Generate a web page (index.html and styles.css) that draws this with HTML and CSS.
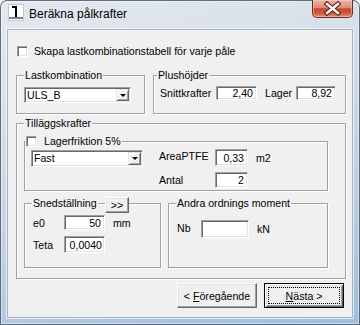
FILE: index.html
```html
<!DOCTYPE html>
<html>
<head>
<meta charset="utf-8">
<link rel="stylesheet" href="styles.css">
</head>
<body>
<div class="window">
  <div class="titlebar">
    <svg class="appicon" width="16" height="17" viewBox="0 0 16 17">
      <rect x="0.5" y="0.5" width="15" height="16" fill="#fff" stroke="#c4c9cf"/>
      <path d="M7 2h2v11H7z M4 2h3v2H4z" fill="#000"/>
      <rect x="1" y="13" width="14" height="2" fill="#7d8289"/>
    </svg>
    <div class="title">Beräkna pålkrafter</div>
    <div class="close">
      <svg width="39" height="17" viewBox="0 0 39 17">
        <path d="M14 4 L25 13 M25 4 L14 13" stroke="#5e1c12" stroke-width="4.6" stroke-linecap="square"/>
        <path d="M14 4 L25 13 M25 4 L14 13" stroke="#fff" stroke-width="2.4" stroke-linecap="square"/>
      </svg>
    </div>
  </div>
  <div class="client">
    <div class="check-row"><span class="checkbox"></span><span>Skapa lastkombinationstabell för varje påle</span></div>

    <div class="row2">
      <fieldset class="group g-last">
        <legend>Lastkombination</legend>
        <div class="last-body">
          <div class="combo w-uls"><span class="combo-text">ULS_B</span><span class="combo-btn"><i class="arrow"></i></span></div>
        </div>
      </fieldset>
      <fieldset class="group g-plus">
        <legend>Plushöjder</legend>
        <div class="plus-body">
          <span class="lbl-snitt">Snittkrafter</span>
          <span class="field f-240">2,40</span>
          <span class="lbl-lager">Lager</span>
          <span class="field f-892">8,92</span>
        </div>
      </fieldset>
    </div>

    <fieldset class="group g-till">
      <legend>Tilläggskrafter</legend>
      <div class="till-body">
        <fieldset class="group g-fri">
          <legend class="chk-legend"><span class="leg-flex"><span class="checkbox"></span><span>Lagerfriktion 5%</span></span></legend>
          <div class="fri-body">
            <div class="combo w-fast"><span class="combo-text">Fast</span><span class="combo-btn"><i class="arrow"></i></span></div>
            <div class="ptfe-grid">
              <span class="lbl-ptfe">AreaPTFE</span><span class="field f-033">0,33</span><span class="unit">m2</span>
              <span>Antal</span><span class="field f-2">2</span><span></span>
            </div>
          </div>
        </fieldset>
        <div class="row-sub">
          <fieldset class="group g-sned">
            <legend>Snedställning</legend>
            <div class="sned-grid">
              <span>e0</span><span class="field f-50">50</span><span class="unit">mm</span>
              <span>Teta</span><span class="field f-teta">0,0040</span><span></span>
            </div>
          </fieldset>
          <fieldset class="group g-andra">
            <legend>Andra ordnings moment</legend>
            <div class="andra-body">
              <span class="lbl-nb">Nb</span><span class="field f-nb"></span><span class="unit">kN</span>
            </div>
          </fieldset>
          <button class="btn-more">&gt;&gt;</button>
        </div>
      </div>
    </fieldset>

    <div class="buttons">
      <button class="btn"><span>&lt; <u>F</u>öregående</span></button>
      <button class="btn default"><span class="focus"><span><u>N</u>ästa &gt;</span></span></button>
    </div>
  </div>
</div>
</body>
</html>
```

FILE: styles.css
```css
* { box-sizing: border-box; }
html, body { margin: 0; padding: 0; }
body {
  width: 360px; height: 325px; overflow: hidden; background: #fff;
  font-family: "Liberation Sans", Arial, sans-serif; font-size: 10.6px; color: #000;
}
.window {
  width: 360px; height: 325px; display: flex; flex-direction: column;
  border-radius: 7px 7px 0 0;
  background: linear-gradient(165deg, #e4e9ef 0%, #d6dfe8 30%, #bfd0e2 62%, #9dbde0 100%);
  box-shadow: inset 0 0 0 1px rgba(50,65,85,.75), inset 0 0 0 2px rgba(255,255,255,.45);
}
.titlebar { height: 30px; flex: none; display: flex; align-items: flex-start; }
.appicon { margin: 4px 0 0 8px; flex: none; }
.title { margin: 6px 0 0 5px; font-size: 12px; line-height: 16px; color: #000; }
.close {
  margin-left: auto; margin-right: 7px; width: 41px; height: 18px; flex: none;
  border: 1px solid #6b2b1f; border-top: none; border-radius: 0 0 5px 5px;
  background: linear-gradient(#eab3a5 0%, #dc8c78 45%, #c6472d 52%, #cd5a3c 78%, #e4957a 100%);
  box-shadow: inset 0 0 0 1px rgba(255,220,210,.45);
}
.close svg { display: block; }
.client {
  margin: 0 8px; width: 344px; height: 287px; flex: none; background: #f0f0f0;
  box-shadow: 0 0 0 1px #a7b1bc, 0 0 0 2px rgba(255,255,255,.7);
  display: flex; flex-direction: column; align-items: flex-start;
}
.check-row {
  display: flex; align-items: center; height: 13px; line-height: 13px;
  margin: 15px 0 0 9px; white-space: nowrap;
}
.checkbox {
  width: 11px; height: 11px; flex: none; background: #fff;
  border: 1px solid; border-color: #a0a0a0 #fff #fff #a0a0a0;
  box-shadow: inset 1px 1px #696969, inset -1px -1px #e3e3e3;
}
.check-row .checkbox { margin-right: 6px; }

.group {
  margin: 0; padding: 0; min-width: 0; border: 1px solid #a0a0a0;
  box-shadow: inset 1px 1px #fff, 1px 1px #fff;
}
.group > legend {
  padding: 0 1px; margin-left: 7px; line-height: 14px; height: 14px;
  background: #f0f0f0; white-space: nowrap;
}
.row2 { display: flex; gap: 8px; margin: 10px 0 0 8px; }
.g-last { width: 129px; height: 46px; }
.g-plus { width: 193px; height: 46px; }
.g-plus > legend { margin-left: 3px; }
.last-body { padding: 5px 0 0 7px; }
.plus-body { display: flex; align-items: center; padding: 4px 0 0 6px; white-space: nowrap; }
.lbl-snitt { width: 56px; }
.lbl-lager { width: 31px; margin-left: 8px; }

.field {
  height: 15px; background: #fff; display: flex; align-items: center; justify-content: flex-end;
  padding: 0 3px; border: 1px solid; border-color: #a0a0a0 #fff #fff #a0a0a0;
  box-shadow: inset 1px 1px #696969, inset -1px -1px #e3e3e3; line-height: 12px;
}
.f-240 { width: 41px; height: 14px; }
.f-892 { width: 40px; height: 14px; }

.combo {
  display: flex; height: 16px; background: #fff; padding: 1px;
  border: 1px solid; border-color: #a0a0a0 #fff #fff #a0a0a0;
  box-shadow: inset 1px 1px #696969, inset -1px -1px #e3e3e3;
}
.combo-text { flex: 1; padding-left: 1px; line-height: 12px; }
.combo-btn {
  width: 13px; flex: none; background: #f0f0f0; display: flex; align-items: center; justify-content: center;
  border: 1px solid; border-color: #e3e3e3 #696969 #696969 #e3e3e3;
  box-shadow: inset 1px 1px #fff, inset -1px -1px #a0a0a0;
}
.arrow {
  display: block; width: 0; height: 0;
  border-left: 3px solid transparent; border-right: 3px solid transparent; border-top: 3px solid #000;
}
.w-uls { width: 107px; }
.w-fast { width: 112px; height: 17px; margin-top: 1px; }

.g-till { width: 330px; height: 163px; margin: 2px 0 0 8px; }
.till-body { display: flex; flex-direction: column; align-items: flex-start; padding: 4px 0 0 7px; }
.g-fri { width: 304px; height: 57px; }
.g-fri > legend.chk-legend { margin-left: 0; padding: 0 1px 0 1px; }
.leg-flex { display: flex; align-items: center; height: 14px; }
.leg-flex .checkbox { margin-right: 7px; }
.fri-body { display: flex; align-items: flex-start; padding: 1px 0 0 6px; }
.ptfe-grid {
  display: grid; grid-template-columns: 56px 33px auto; row-gap: 6px; align-items: center;
  margin-left: 16px;
}
.lbl-ptfe { margin-top: -3px; }
.unit { margin-left: 8px; }
.f-033 { height: 17px; }
.f-2 { height: 16px; }

.row-sub { display: flex; gap: 7px; margin-top: 5px; position: relative; }
.g-sned { width: 137px; height: 72px; }
.g-andra { width: 160px; height: 72px; }
.sned-grid {
  display: grid; grid-template-columns: 31px 41px auto; row-gap: 6px; align-items: center;
  padding: 5px 0 0 8px;
}
.f-50 { height: 15px; }
.f-teta { height: 17px; padding-right: 2px; }
.andra-body { display: flex; align-items: center; padding: 10px 0 0 8px; }
.lbl-nb { width: 24px; margin-top: -3px; }
.f-nb { width: 48px; height: 18px; }

.btn-more {
  position: absolute; left: 81px; top: 1px; width: 24px; height: 16px; padding: 0;
  font: inherit; color: #000; background: #f0f0f0; line-height: 12px;
  border: 1px solid; border-color: #fff #696969 #696969 #fff;
  box-shadow: inset -1px -1px #a0a0a0, inset 1px 1px #e3e3e3;
}
.buttons { display: flex; gap: 7px; margin: 4px 8px 0 auto; }
.btn {
  width: 80px; height: 25px; padding: 0; font: inherit; color: #000; background: #f0f0f0;
  display: flex; align-items: center; justify-content: center; white-space: nowrap;
  border: 1px solid; border-color: #fff #696969 #696969 #fff;
  box-shadow: inset -1px -1px #a0a0a0, inset 1px 1px #e3e3e3;
}
.btn.default {
  border: 1px solid #000; padding: 3px;
  box-shadow: inset 1px 1px #fff, inset -1px -1px #696969, inset 2px 2px #e3e3e3, inset -2px -2px #a0a0a0;
}
.focus {
  flex: 1; align-self: stretch; border: 1px dotted #000;
  display: flex; align-items: center; justify-content: center;
}
```
